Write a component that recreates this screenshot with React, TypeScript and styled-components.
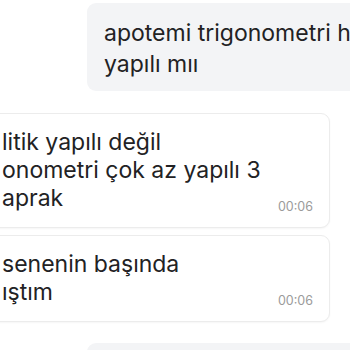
import styled, { createGlobalStyle } from 'styled-components'

const GlobalStyle = createGlobalStyle`
  html, body {
    margin: 0;
    padding: 0;
    background: #ffffff;
    overflow: hidden;
  }
  body {
    font-family: Inter, 'Noto Sans', sans-serif;
    color: #222224;
  }
`

type Message = {
  id: number
  out: boolean
  lines: string[]
  time?: string
}

// the chat is scrolled: the last outgoing bubble only peeks in at the bottom
const messages: Message[] = [
  { id: 1, out: true, lines: ['apotemi trigonometri hiç', 'yapılı mıı'] },
  { id: 2, out: false, lines: ['litik yapılı değil', 'onometri çok az yapılı 3', 'aprak'], time: '00:06' },
  { id: 3, out: false, lines: ['senenin başında', 'ıştım'], time: '00:06' },
  { id: 4, out: true, lines: [] },
]

export default function App() {
  return (
    <>
      <GlobalStyle />
      <Chat>
        {messages.map((m) => (
          <Bubble key={m.id} $out={m.out}>
            <Text $out={m.out}>
              {m.lines.map((l, i) => (
                <Line key={i}>{l}</Line>
              ))}
            </Text>
            {m.time && <Time>{m.time}</Time>}
          </Bubble>
        ))}
      </Chat>
    </>
  )
}

const Chat = styled.div`
  width: 350px;
  height: 350px;
  padding-top: 3px;
  box-sizing: border-box;
  display: flex;
  flex-direction: column;
  overflow: hidden;
`

const Bubble = styled.div<{ $out: boolean }>`
  display: flex;
  align-items: flex-end;
  box-sizing: border-box;
  flex-shrink: 0;
  min-height: 60px;
  border-radius: 9px;
  ${({ $out }) =>
    $out
      ? `
    margin: 0 -80px 22px 87px;
    padding: 15px 16px 11px 17px;
    background: #f3f4f6;
  `
      : `
    margin: 0 20px 7px -20px;
    padding: 14px 16px 15px 21px;
    background: #ffffff;
    border: 1px solid #ececec;
    box-shadow: 0 1px 2px rgba(0, 0, 0, 0.04);
  `}
  &:nth-child(3) {
    margin-bottom: 21px;
  }
`

const Text = styled.div<{ $out: boolean }>`
  flex: 1;
  font-size: 23px;
  line-height: ${({ $out }) => ($out ? '31px' : '28px')};
  white-space: nowrap;
`

const Line = styled.div``

const Time = styled.span`
  font-size: 12.5px;
  line-height: 14px;
  color: #9b9b9b;
  margin-bottom: -2px;
  margin-left: 12px;
`
